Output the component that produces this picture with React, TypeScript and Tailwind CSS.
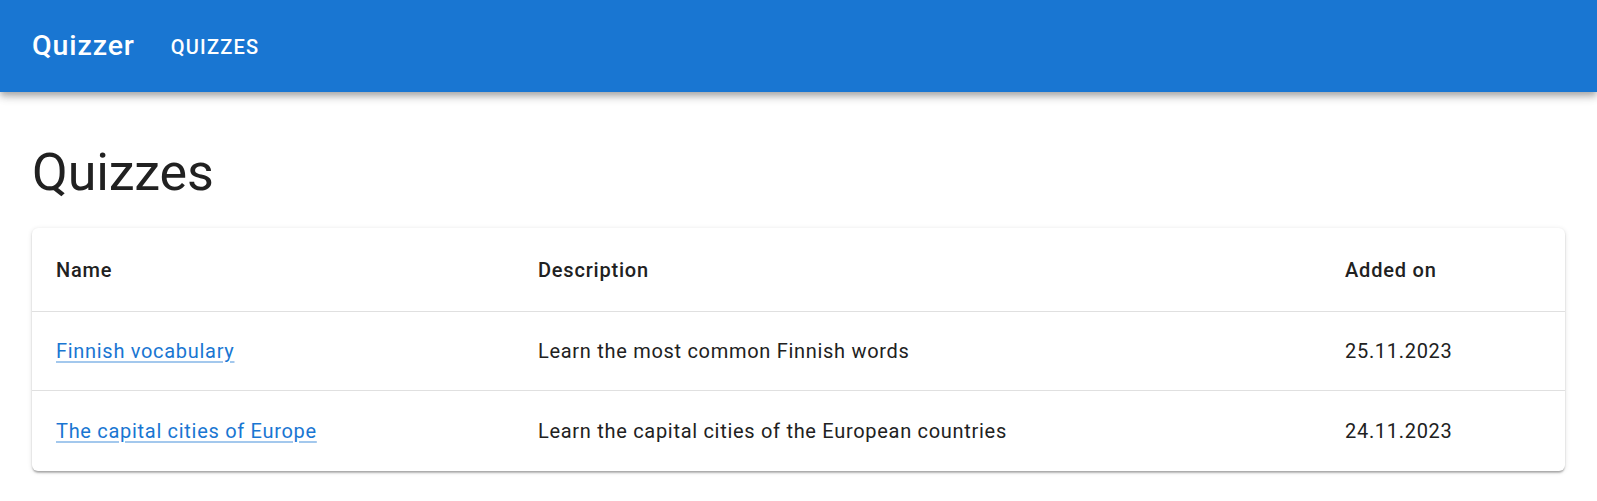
import React from "react";

const rows = [
  { name: "Finnish vocabulary", desc: "Learn the most common Finnish words", date: "25.11.2023" },
  { name: "The capital cities of Europe", desc: "Learn the capital cities of the European countries", date: "24.11.2023" },
];

export default function App() {
  return (
    <div className="min-h-[501px] bg-white text-[#212121]" style={{ fontFamily: "Roboto, 'Noto Sans', sans-serif" }}>
      <header className="h-[92px] bg-[#1976d2] flex items-center px-[32px] gap-[36px] text-white shadow-[0px_3px_6px_-1px_rgba(0,0,0,0.2),0px_6px_7px_0px_rgba(0,0,0,0.14),0px_1px_14px_0px_rgba(0,0,0,0.12)] relative z-10">
        <div className="text-[28.5px] font-medium tracking-[0.9px] leading-none">Quizzer</div>
        <div className="text-[20px] font-medium tracking-[1.2px] uppercase leading-none mt-[1px]">Quizzes</div>
      </header>
      <main className="px-[32px] pt-[49px]">
        <h1 className="text-[52px] font-normal leading-[64px] tracking-[-0.15px] m-0">Quizzes</h1>
        <div className="mt-[23px] bg-white rounded-[6px] overflow-hidden shadow-[0px_3px_2px_-1px_rgba(0,0,0,0.2),0px_1px_2px_0px_rgba(0,0,0,0.14),0px_1px_5px_0px_rgba(0,0,0,0.12)]">
          <div className="grid grid-cols-[482px_807px_1fr] h-[84px] items-center border-b border-[#e0e0e0] text-[20px] font-medium tracking-[0.8px]">
            <div className="pl-[24px]">Name</div>
            <div className="pl-[24px]">Description</div>
            <div className="pl-[24px]">Added on</div>
          </div>
          {rows.map((r, i) => (
            <div
              key={r.name}
              className={
                i === rows.length - 1
                  ? "grid grid-cols-[482px_807px_1fr] h-[80px] items-center text-[20px] tracking-[0.7px]"
                  : "grid grid-cols-[482px_807px_1fr] h-[79px] items-center border-b border-[#e0e0e0] text-[20px] tracking-[0.7px]"
              }
            >
              <div className="pl-[24px]">
                <a href="#" className="text-[#1976d2] underline decoration-[rgba(25,118,210,0.4)] underline-offset-[3px]">
                  {r.name}
                </a>
              </div>
              <div className="pl-[24px]">{r.desc}</div>
              <div className="pl-[24px]">{r.date}</div>
            </div>
          ))}
        </div>
      </main>
    </div>
  );
}
